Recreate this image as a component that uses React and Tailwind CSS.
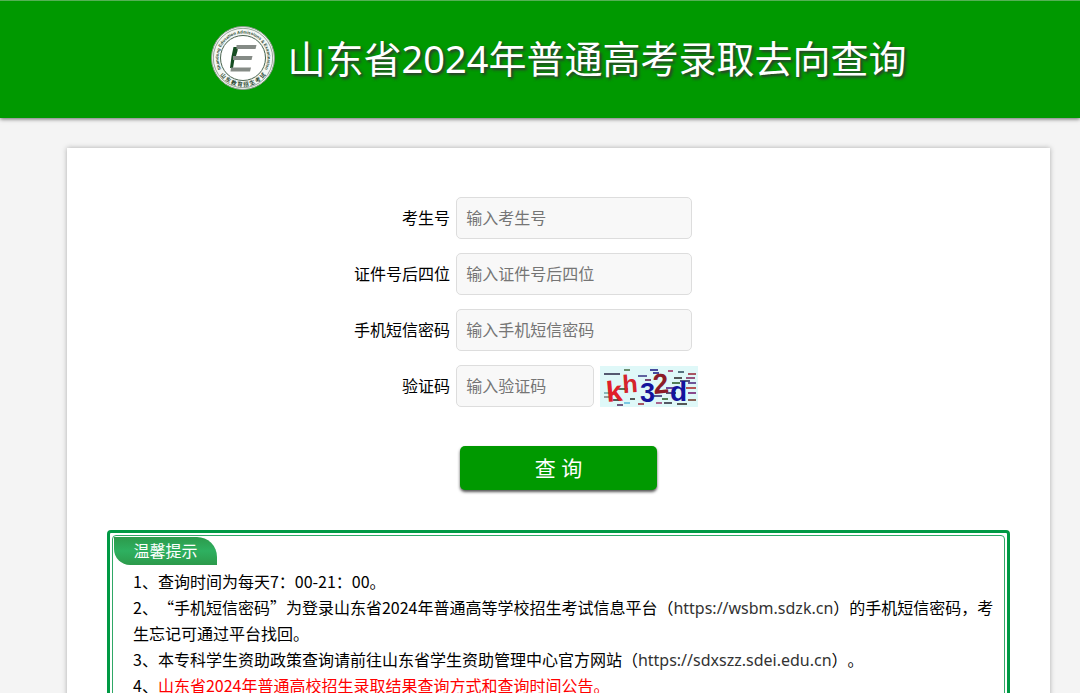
import { useState } from "react";

const fields = [
  { id: "ksh", label: "考生号", placeholder: "输入考生号" },
  { id: "sfz", label: "证件号后四位", placeholder: "输入证件号后四位" },
  { id: "mm", label: "手机短信密码", placeholder: "输入手机短信密码" },
];

// [x, y, width, color]
const noise = [
  [4, 8, 16, "#3d3d58"],
  [24, 4, 6, "#557a55"],
  [38, 10, 9, "#4a4a90"],
  [45, 14, 6, "#6a2a5a"],
  [50, 4, 8, "#2b2b8c"],
  [53, 7, 6, "#2b2b8c"],
  [68, 5, 5, "#a33a6a"],
  [78, 6, 6, "#3d5a6a"],
  [88, 8, 8, "#a03a4a"],
  [86, 12, 9, "#8a3a6a"],
  [80, 15, 10, "#3a3a6a"],
  [74, 12, 8, "#3a3a3a"],
  [72, 17, 8, "#3a6a3a"],
  [88, 17, 8, "#5a3a8a"],
  [86, 22, 10, "#b03a3a"],
  [66, 22, 8, "#5a2a8a"],
  [66, 27, 10, "#3a3a5a"],
  [88, 27, 8, "#7a2a7a"],
  [4, 27, 7, "#7ab0b0"],
  [4, 31, 6, "#8a8a8a"],
  [18, 23, 10, "#3a5a3a"],
  [13, 34, 8, "#3a3a3a"],
  [17, 39, 6, "#5a3a6a"],
  [24, 37, 6, "#6ac0e0"],
  [30, 33, 5, "#3a3a3a"],
  [38, 38, 6, "#a03a4a"],
  [56, 37, 6, "#a04a7a"],
  [62, 33, 6, "#3a6a3a"],
  [64, 37, 8, "#3a3a4a"],
  [77, 38, 10, "#3a3a3a"],
  [88, 34, 8, "#7a4a3a"],
  [54, 30, 8, "#3a3a7a"],
];

const Logo = () => (
  <svg width="66" height="66" viewBox="0 0 66 66" aria-hidden="true">
    <circle cx="33" cy="33" r="31.5" fill="#f4f7f4" stroke="#8a9a8a" />
    <circle
      cx="33"
      cy="33"
      r="29.7"
      fill="none"
      stroke="#7e8e80"
      strokeWidth="0.8"
    />
    <circle
      cx="33"
      cy="33"
      r="22.5"
      fill="#fff"
      stroke="#4a6450"
      strokeWidth="1"
    />
    <defs>
      <path id="arcTop" d="M12.1 45.5 A24.4 24.4 0 1 1 53.9 45.5" />
      <path id="arcBottom" d="M7.5 45.5 A28.4 28.4 0 0 0 58.5 45.5" />
    </defs>
    <g fill="#2d4a32" fontWeight="bold">
      <text fontSize="4.3" fontFamily="Liberation Sans, sans-serif">
        <textPath href="#arcTop" startOffset="50%" textAnchor="middle">
          Shandong Education Admissions &amp; Examination
        </textPath>
      </text>
      <text fontSize="5.5" fontFamily="Noto Sans CJK SC, sans-serif">
        <textPath href="#arcBottom" startOffset="50%" textAnchor="middle">
          山 东 教 育 招 生 考 试
        </textPath>
      </text>
    </g>
    <path
      d="M23.5 22h4.5l-.5 4-1.5 5h-2.5l1 3-1.500 9h-3l1.500-11.500z"
      fill="#174d22"
    />
    <path
      d="M26.5 20h20l-1 4h-19zM23 31h19.500l-1 4h-18.500zM21 42.5h20l-1 4h-19.500z"
      fill="#858b86"
    />
  </svg>
);

const Captcha = () => (
  <svg
    width="98"
    height="41"
    viewBox="0 0 98 41"
    role="img"
    aria-label="kh32d"
  >
    <rect width="98" height="41" fill="#dff8f8" />
    {noise.map(([x, y, w, color], i) => (
      <path key={i} d={`M${x} ${y}h${w}`} stroke={color} strokeWidth="1.7" />
    ))}
    <g fontFamily="Liberation Sans, sans-serif" fontWeight="bold">
      <text x="7" y="36" rotate="-5" fontSize="29" fill="#e0202a">
        k
      </text>
      <text x="23" y="27" rotate="-4" fontSize="25" fill="#d4242c">
        h
      </text>
      <text x="40" y="36" fontSize="27" fill="#14149c">
        3
      </text>
      <text x="54" y="28" rotate="-6" fontSize="28" fill="#8c1c28">
        2
      </text>
      <text x="70" y="35" fontSize="28" fill="#14149c">
        d
      </text>
    </g>
  </svg>
);

const inputClass =
  "h-[42px] rounded-[5px] border border-[#dddddd] bg-[#f8f8f8] px-[9px] text-base text-black outline-none placeholder:text-[#757575]";

const urlClass = "font-['Noto_Sans',sans-serif] leading-5 text-[#333333]";

function App() {
  const [form, setForm] = useState({ ksh: "", sfz: "", mm: "", yzm: "" });

  const onChange = (e) =>
    setForm((prev) => ({ ...prev, [e.target.id]: e.target.value }));

  return (
    <div
      lang="zh-CN"
      className="min-h-screen bg-[#f4f4f4] font-['Noto_Sans','Noto_Sans_CJK_SC',sans-serif] text-base text-black"
    >
      <header className="flex h-[118px] items-center justify-center gap-3 border-t border-[#55b055] bg-[#009900] pb-1 pl-9 shadow-[0_1px_4px_#666]">
        <Logo />
        <h1 className="text-[38px] leading-none text-white [text-shadow:2px_2px_3px_#333]">
          山东省2024年普通高考录取去向查询
        </h1>
      </header>

      <main className="mt-[30px] mr-[30px] ml-[67px] bg-white px-10 pt-[49px] pb-10 shadow-[0_0_5px_#aaa]">
        <form onSubmit={(e) => e.preventDefault()}>
          <div className="flex flex-col gap-[14px]">
            {fields.map((f) => (
              <div key={f.id} className="flex items-center gap-[6px]">
                <label htmlFor={f.id} className="w-[38%] text-right">
                  {f.label}
                </label>
                <input
                  id={f.id}
                  type="text"
                  placeholder={f.placeholder}
                  value={form[f.id]}
                  onChange={onChange}
                  className={`${inputClass} w-[236px]`}
                />
              </div>
            ))}
            <div className="flex items-center gap-[6px]">
              <label htmlFor="yzm" className="w-[38%] text-right">
                验证码
              </label>
              <input
                id="yzm"
                type="text"
                placeholder="输入验证码"
                value={form.yzm}
                onChange={onChange}
                className={`${inputClass} w-[138px]`}
              />
              <Captcha />
            </div>
          </div>
          <button
            type="submit"
            className="mx-auto mt-[39px] block h-11 w-[197px] rounded-[5px] bg-[#009900] pt-px text-[21px] text-white shadow-[0_2px_3px_#555]"
          >
            查 询
          </button>
        </form>

        <section className="mt-10 rounded-[4px] border-[3px] border-[#009944] p-[2px]">
          <div className="rounded-[4px] border border-[#2fa866] p-px pb-4">
            <h2 className="flex h-7 w-[103px] items-center justify-center rounded-tr-[20px] rounded-bl-[16px] bg-linear-to-b from-[#2c9a4b] via-[#2eb060] to-[#2c9a4b] text-white">
              温馨提示
            </h2>
            <div className="pt-[3px] pl-[19px] font-['Noto_Sans_CJK_SC',sans-serif] leading-[26px] [text-spacing-trim:space-all]">
              <p>1、查询时间为每天7：00-21：00。</p>
              <p>
                2、“手机短信密码”为登录山东省2024年普通高等学校招生考试信息平台（
                <a href="https://wsbm.sdzk.cn" className={urlClass}>
                  https://wsbm.sdzk.cn
                </a>
                ）的手机短信密码，考生忘记可通过平台找回。
              </p>
              <p>
                3、本专科学生资助政策查询请前往山东省学生资助管理中心官方网站（
                <a href="https://sdxszz.sdei.edu.cn" className={urlClass}>
                  https://sdxszz.sdei.edu.cn
                </a>
                ）。
              </p>
              <p>
                4、
                <a href="#notice" className="text-[#ff0000]">
                  山东省2024年普通高校招生录取结果查询方式和查询时间公告。
                </a>
              </p>
            </div>
          </div>
        </section>
      </main>
    </div>
  );
}

export default App;
